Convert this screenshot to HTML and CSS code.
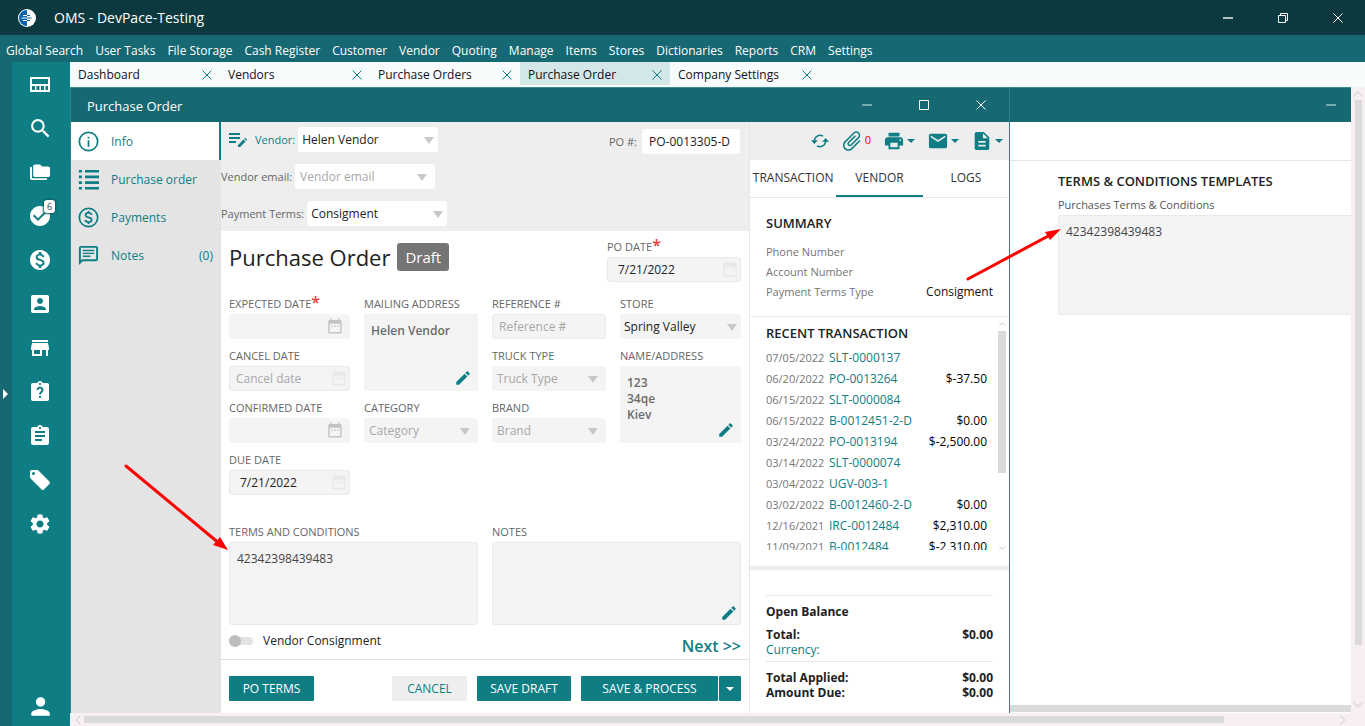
FILE: index.html
```html
<!DOCTYPE html>
<html lang="en">
    <head>
        <meta charset="UTF-8" />
        <meta name="viewport" content="width=device-width, initial-scale=1.0" />
        <title>OMS - DevPace-Testing</title>
        <link rel="stylesheet" href="styles.css">
    </head>
    <body>
        <svg class="sprite" aria-hidden="true">
            <symbol id="i-close" viewBox="0 0 12 12"><path d="M1.5 1.5l9 9M10.5 1.5l-9 9" fill="none" stroke="currentColor"/></symbol>
            <symbol id="i-min" viewBox="0 0 12 12"><path d="M1 6h10" fill="none" stroke="currentColor" stroke-width="1.4"/></symbol>
            <symbol id="i-max" viewBox="0 0 12 12"><path d="M1.5 1.5h9v9h-9z" fill="none" stroke="currentColor"/></symbol>
            <symbol id="i-up" viewBox="0 0 10 10"><path d="M1.5 7L5 3.5 8.5 7" fill="none" stroke="currentColor" stroke-width="1.3"/></symbol>
            <symbol id="i-down" viewBox="0 0 10 10"><path d="M1.5 3L5 6.5 8.5 3" fill="none" stroke="currentColor" stroke-width="1.3"/></symbol>
            <symbol id="i-left" viewBox="0 0 10 10"><path d="M7 1.5L3.5 5 7 8.5" fill="none" stroke="currentColor" stroke-width="1.3"/></symbol>
            <symbol id="i-right" viewBox="0 0 10 10"><path d="M3 1.5L6.5 5 3 8.5" fill="none" stroke="currentColor" stroke-width="1.3"/></symbol>
            <symbol id="i-edit" viewBox="0 0 24 24"><path d="M3 17.25V21h3.75L17.81 9.94l-3.75-3.75L3 17.25zM20.71 7.04c.39-.39.39-1.02 0-1.41l-2.34-2.34c-.39-.39-1.02-.39-1.41 0l-1.83 1.83 3.75 3.75 1.83-1.83z"/></symbol>
            <symbol id="i-calendar" viewBox="0 0 24 24"><path d="M9 11H7v2h2v-2zm4 0h-2v2h2v-2zm4 0h-2v2h2v-2zm2-7h-1V2h-2v2H8V2H6v2H5c-1.11 0-1.99.9-1.99 2L3 20c0 1.1.89 2 2 2h14c1.1 0 2-.9 2-2V6c0-1.1-.9-2-2-2zm0 16H5V9h14v11z"/></symbol>
        </svg>

        <header class="titlebar">
            <svg class="app-logo" viewBox="0 0 18 18">
                <circle cx="9" cy="9" r="9" fill="#fff"/>
                <path d="M9 1a8 8 0 0 0 0 16z" fill="#0b62a4"/>
                <path d="M5 6.500h4M3.500 9h5.500M5 11.500h4" stroke="#fff" stroke-width="1.2"/>
                <path d="M9 6.500h3M9 9h4.500M9 11.500h3" stroke="#0b62a4" stroke-width="1.2"/>
            </svg>
            <h1>OMS - DevPace-Testing</h1>
            <div class="app-controls">
                <button aria-label="Minimize"><svg><use href="#i-min"/></svg></button>
                <button aria-label="Restore"><svg viewBox="0 0 12 12"><path d="M1.5 3.5h7v7h-7zM3.5 3.5v-2h7v7h-2" fill="none" stroke="currentColor"/></svg></button>
                <button aria-label="Close"><svg><use href="#i-close"/></svg></button>
            </div>
        </header>

        <nav class="menubar">
            <a href="#">Global Search</a>
            <a href="#">User Tasks</a>
            <a href="#">File Storage</a>
            <a href="#">Cash Register</a>
            <a href="#">Customer</a>
            <a href="#">Vendor</a>
            <a href="#">Quoting</a>
            <a href="#">Manage</a>
            <a href="#">Items</a>
            <a href="#">Stores</a>
            <a href="#">Dictionaries</a>
            <a href="#">Reports</a>
            <a href="#">CRM</a>
            <a href="#">Settings</a>
        </nav>

        <div class="shell">
            <button class="expander" aria-label="Expand menu"></button>
            <nav class="sidebar">
                <a href="#" aria-label="Dashboard"><svg viewBox="1 1 22 22"><path fill-rule="evenodd" d="M2 5h20v15H2zM4 7v5h16V7zM4 14v4h3v-4zM8.500 14v4h3v-4zM13 14v4h3v-4zM17.500 14v4H20v-4z"/></svg></a>
                <a href="#" aria-label="Search"><svg viewBox="1 1 21 21"><path d="M15.5 14h-.79l-.28-.27A6.471 6.471 0 0 0 16 9.5 6.5 6.5 0 1 0 9.5 16c1.61 0 3.09-.59 4.23-1.57l.27.28v.79l5 4.99L20.49 19l-4.99-5zm-6 0C7.01 14 5 11.99 5 9.5S7.01 5 9.5 5 14 7.01 14 9.5 11.99 14 9.5 14z"/></svg></a>
                <a href="#" aria-label="Files"><svg viewBox="1 1 22 22"><path d="M2 7v11c0 1.2.8 2 2 2h15v-1.800H4V7zM7 4.500c-1 0-1.800.8-1.800 1.800v8.900c0 1 .8 1.800 1.800 1.800h13.200c1 0 1.800-.8 1.800-1.800V8.300c0-1-.8-1.800-1.800-1.800H14l-2-2z"/></svg></a>
                <a href="#" aria-label="Tasks"><svg viewBox="1 1 22 22"><path d="M12 2C6.48 2 2 6.48 2 12s4.48 10 10 10 10-4.48 10-10S17.52 2 12 2zm-2 15l-5-5 1.41-1.41L10 14.17l7.59-7.59L19 8l-9 9z"/></svg><span class="badge">6</span></a>
                <a href="#" aria-label="Money"><svg viewBox="1 1 22 22"><path d="M12 2C6.48 2 2 6.48 2 12s4.48 10 10 10 10-4.48 10-10S17.52 2 12 2zm1.41 16.09V20h-2.67v-1.93c-1.71-.36-3.16-1.46-3.27-3.4h1.96c.1 1.05.82 1.87 2.65 1.87 1.96 0 2.4-.98 2.4-1.59 0-.83-.44-1.61-2.67-2.14-2.48-.6-4.18-1.62-4.18-3.67 0-1.72 1.39-2.84 3.11-3.21V4h2.67v1.95c1.86.45 2.79 1.86 2.85 3.39H14.3c-.05-1.11-.64-1.87-2.22-1.87-1.5 0-2.4.68-2.4 1.64 0 .84.65 1.39 2.67 1.91s4.18 1.39 4.18 3.91c-.01 1.83-1.38 2.83-3.12 3.16z"/></svg></a>
                <a href="#" aria-label="Contacts"><svg viewBox="1 1 22 22"><path d="M3 5v14c0 1.1.89 2 2 2h14c1.1 0 2-.9 2-2V5c0-1.1-.9-2-2-2H5c-1.11 0-2 .9-2 2zm12 4c0 1.66-1.34 3-3 3s-3-1.34-3-3 1.34-3 3-3 3 1.34 3 3zm-9 8c0-2 4-3.1 6-3.1s6 1.1 6 3.1v1H6v-1z"/></svg></a>
                <a href="#" aria-label="Store"><svg viewBox="1 1 22 22"><path d="M20 4H4v2h16V4zm1 10v-2l-1-5H4l-1 5v2h1v6h10v-6h4v6h2v-6h1zm-9 4H6v-4h6v4z"/></svg></a>
                <a href="#" aria-label="Requests"><svg viewBox="1 1 22 22"><path d="M19 3h-4.18C14.4 1.84 13.3 1 12 1c-1.3 0-2.4.84-2.82 2H5c-1.1 0-2 .9-2 2v14c0 1.1.9 2 2 2h14c1.1 0 2-.9 2-2V5c0-1.1-.9-2-2-2zm-7 0c.55 0 1 .45 1 1s-.45 1-1 1-1-.45-1-1 .45-1 1-1z"/><path d="M9.500 10a2.500 2.500 0 1 1 3.800 2.100c-.9.6-1.300 1-1.300 2.400M12 16v2" class="cut"/></svg></a>
                <a href="#" aria-label="Assignments"><svg viewBox="1 1 22 22"><path d="M19 3h-4.18C14.4 1.84 13.3 1 12 1c-1.3 0-2.4.84-2.82 2H5c-1.1 0-2 .9-2 2v14c0 1.1.9 2 2 2h14c1.1 0 2-.9 2-2V5c0-1.1-.9-2-2-2zm-7 0c.55 0 1 .45 1 1s-.45 1-1 1-1-.45-1-1 .45-1 1-1zm2 14H7v-2h7v2zm3-4H7v-2h10v2zm0-4H7V7h10v2z"/></svg></a>
                <a href="#" aria-label="Price tags"><svg viewBox="1 1 22 22"><path fill-rule="evenodd" d="M2 3.500A1.500 1.500 0 0 1 3.500 2H9c.6 0 1 .2 1.400.6l11 11c.7.7.7 1.600 0 2.300l-5.500 5.500c-.7.7-1.600.7-2.300 0l-11-11C2.200 10 2 9.600 2 9zM5.500 4a1.500 1.500 0 1 0 0 3 1.500 1.500 0 0 0 0-3z"/></svg></a>
                <a href="#" aria-label="Settings"><svg viewBox="1 1 22 22"><path d="M19.14 12.94c.04-.3.06-.61.06-.94 0-.32-.02-.64-.07-.94l2.03-1.58c.18-.14.23-.41.12-.61l-1.92-3.32c-.12-.22-.37-.29-.59-.22l-2.39.96c-.5-.38-1.03-.7-1.62-.94l-.36-2.54c-.04-.24-.24-.41-.48-.41h-3.84c-.24 0-.43.17-.47.41l-.36 2.54c-.59.24-1.13.57-1.62.94l-2.39-.96c-.22-.08-.47 0-.59.22L2.74 8.87c-.12.21-.08.47.12.61l2.03 1.58c-.05.3-.09.63-.09.94s.02.64.07.94l-2.03 1.58c-.18.14-.23.41-.12.61l1.92 3.32c.12.22.37.29.59.22l2.39-.96c.5.38 1.03.7 1.62.94l.36 2.54c.05.24.24.41.48.41h3.84c.24 0 .44-.17.47-.41l.36-2.54c.59-.24 1.13-.56 1.62-.94l2.39.96c.22.08.47 0 .59-.22l1.92-3.32c.12-.22.07-.47-.12-.61l-2.01-1.58zM12 15.6c-1.98 0-3.6-1.62-3.6-3.6s1.62-3.6 3.6-3.6 3.6 1.62 3.6 3.6-1.62 3.6-3.6 3.6z"/></svg></a>
                <a href="#" aria-label="Profile" class="profile"><svg viewBox="2 2 19 19"><path d="M12 12c2.21 0 4-1.79 4-4s-1.79-4-4-4-4 1.79-4 4 1.79 4 4 4zm0 2c-2.67 0-8 1.34-8 4v2h16v-2c0-2.66-5.33-4-8-4z"/></svg></a>
            </nav>

            <div class="main">
                <div class="tabs">
                    <div class="tab"><a href="#">Dashboard</a><button aria-label="Close Dashboard"><svg><use href="#i-close"/></svg></button></div>
                    <div class="tab"><a href="#">Vendors</a><button aria-label="Close Vendors"><svg><use href="#i-close"/></svg></button></div>
                    <div class="tab"><a href="#">Purchase Orders</a><button aria-label="Close Purchase Orders"><svg><use href="#i-close"/></svg></button></div>
                    <div class="tab active"><a href="#">Purchase Order</a><button aria-label="Close Purchase Order"><svg><use href="#i-close"/></svg></button></div>
                    <div class="tab"><a href="#">Company Settings</a><button aria-label="Close Company Settings"><svg><use href="#i-close"/></svg></button></div>
                </div>

                <div class="workspace">
                    <section class="window order-window">
                        <div class="window-title">
                            <h2>Purchase Order</h2>
                            <button aria-label="Minimize" class="minimize"><svg><use href="#i-min"/></svg></button>
                            <button aria-label="Maximize"><svg><use href="#i-max"/></svg></button>
                            <button aria-label="Close"><svg><use href="#i-close"/></svg></button>
                        </div>
                        <div class="window-body">
                            <nav class="steps">
                                <a href="#" class="active"><svg viewBox="0 0 24 24"><circle cx="12" cy="12" r="10.5" class="line"/><path d="M11 10.500h2V18h-2zM11 6.500h2v2h-2z"/></svg><span>Info</span></a>
                                <a href="#"><svg viewBox="0 0 24 24"><path d="M1 1h3.500v3H1zM8 1h16v3H8zM1 7.500h3.500v3H1zM8 7.500h16v3H8zM1 14h3.500v3H1zM8 14h16v3H8zM1 20.500h3.500v3H1zM8 20.500h16v3H8z"/></svg><span>Purchase order</span></a>
                                <a href="#"><svg viewBox="0 0 24 24"><circle cx="12" cy="12" r="10.5" class="line"/><path class="line" d="M15.500 9c-.3-1.600-1.600-2.300-3.500-2.300-2 0-3.400.9-3.400 2.500 0 3.800 7 1.700 7 5.600 0 1.600-1.500 2.500-3.600 2.500s-3.500-.9-3.700-2.500M12 4.500v2.200M12 17.300v2.200"/></svg><span>Payments</span></a>
                                <a href="#"><svg viewBox="1 1 22 22"><path d="M4 4h16v12H5.170L4 17.170V4m0-2c-1.100 0-1.990.9-1.990 2L2 22l4-4h14c1.100 0 2-.9 2-2V4c0-1.100-.9-2-2-2H4zm2 10h8v1.500H6V12zm0-3h12v1.500H6V9zm0-3h12v1.500H6V6z"/></svg><span>Notes</span><em>(0)</em></a>
                            </nav>

                            <form class="order-form">
                                <div class="form-header">
                                    <div class="vendor-fields">
                                        <div class="inline-field first">
                                            <svg viewBox="0 0 18 16" class="list-edit"><path d="M0 1h11v2H0zM0 5h11v2H0zM0 9h7v2H0zM9 13l5.500-5.500 2 2L11 15H9zM15.200 6.800l1-1 2 2-1 1z"/></svg>
                                            <label for="vendor">Vendor:</label>
                                            <div class="select"><select id="vendor"><option>Helen Vendor</option></select></div>
                                        </div>
                                        <div class="inline-field">
                                            <label for="vendorEmail">Vendor email:</label>
                                            <div class="select empty"><select id="vendorEmail"><option>Vendor email</option></select></div>
                                        </div>
                                        <div class="inline-field">
                                            <label for="terms">Payment Terms:</label>
                                            <div class="select"><select id="terms"><option>Consigment</option></select></div>
                                        </div>
                                    </div>
                                    <div class="po-number">
                                        <label for="poNumber">PO #:</label>
                                        <input id="poNumber" type="text" value="PO-0013305-D">
                                    </div>
                                </div>

                                <div class="form-content">
                                    <div class="form-title">
                                        <h3>Purchase Order</h3>
                                        <span class="status">Draft</span>
                                        <div class="field po-date">
                                            <label for="poDate">PO DATE<b>*</b></label>
                                            <div class="date set"><input id="poDate" type="text" value="7/21/2022"><svg><use href="#i-calendar"/></svg></div>
                                        </div>
                                    </div>

                                    <div class="fields">
                                        <div class="field">
                                            <label for="expected">EXPECTED DATE<b>*</b></label>
                                            <div class="date open"><input id="expected" type="text"><svg><use href="#i-calendar"/></svg></div>
                                        </div>
                                        <div class="field tall">
                                            <h4>MAILING ADDRESS</h4>
                                            <div class="address">Helen Vendor<button type="button" aria-label="Edit mailing address"><svg><use href="#i-edit"/></svg></button></div>
                                        </div>
                                        <div class="field">
                                            <label for="reference">REFERENCE #</label>
                                            <input id="reference" type="text" placeholder="Reference #">
                                        </div>
                                        <div class="field">
                                            <label for="store">STORE</label>
                                            <div class="select"><select id="store"><option>Spring Valley</option></select></div>
                                        </div>
                                        <div class="field">
                                            <label for="cancel">CANCEL DATE</label>
                                            <div class="date"><input id="cancel" type="text" placeholder="Cancel date"><svg><use href="#i-calendar"/></svg></div>
                                        </div>
                                        <div class="field">
                                            <label for="truck">TRUCK TYPE</label>
                                            <div class="select empty"><select id="truck"><option>Truck Type</option></select></div>
                                        </div>
                                        <div class="field tall">
                                            <h4>NAME/ADDRESS</h4>
                                            <div class="address">123<br>34qe<br>Kiev<button type="button" aria-label="Edit name and address"><svg><use href="#i-edit"/></svg></button></div>
                                        </div>
                                        <div class="field">
                                            <label for="confirmed">CONFIRMED DATE</label>
                                            <div class="date open"><input id="confirmed" type="text"><svg><use href="#i-calendar"/></svg></div>
                                        </div>
                                        <div class="field">
                                            <label for="category">CATEGORY</label>
                                            <div class="select empty"><select id="category"><option>Category</option></select></div>
                                        </div>
                                        <div class="field">
                                            <label for="brand">BRAND</label>
                                            <div class="select empty"><select id="brand"><option>Brand</option></select></div>
                                        </div>
                                        <div class="field">
                                            <label for="due">DUE DATE</label>
                                            <div class="date set"><input id="due" type="text" value="7/21/2022"><svg><use href="#i-calendar"/></svg></div>
                                        </div>
                                    </div>

                                    <div class="notes">
                                        <div class="field">
                                            <label for="orderTerms">TERMS AND CONDITIONS</label>
                                            <textarea id="orderTerms">42342398439483</textarea>
                                        </div>
                                        <div class="field">
                                            <label for="orderNotes">NOTES</label>
                                            <div class="note-box">
                                                <textarea id="orderNotes"></textarea>
                                                <button type="button" aria-label="Edit notes"><svg><use href="#i-edit"/></svg></button>
                                            </div>
                                        </div>
                                    </div>

                                    <div class="form-bottom">
                                        <input type="checkbox" id="consignment" class="toggle">
                                        <label for="consignment">Vendor Consignment</label>
                                        <a href="#" class="next">Next &gt;&gt;</a>
                                    </div>
                                </div>

                                <div class="actions">
                                    <button type="button" class="btn terms">PO TERMS</button>
                                    <button type="button" class="btn cancel">CANCEL</button>
                                    <button type="button" class="btn draft">SAVE DRAFT</button>
                                    <div class="split">
                                        <button type="button" class="btn process">SAVE &amp; PROCESS</button>
                                        <button type="button" class="btn more" aria-label="More save options"></button>
                                    </div>
                                </div>
                            </form>

                            <aside class="info-panel">
                                <div class="tools">
                                    <button aria-label="Refresh"><svg viewBox="0 0 24 24" class="refresh"><path class="line" d="M4.500 12A7.500 7.500 0 0 1 16 5.600M19.500 12A7.500 7.500 0 0 1 8 18.400"/><path d="M0 11h9l-4.500 5zM15 13h9l-4.500-5z"/></svg></button>
                                    <button aria-label="Attachments"><svg viewBox="2 2 20 20"><path transform="rotate(45 12 12)" d="M16.5 6v11.5c0 2.21-1.79 4-4 4s-4-1.79-4-4V5c0-1.38 1.12-2.5 2.5-2.5s2.5 1.12 2.5 2.5v10.5c0 .55-.45 1-1 1s-1-.45-1-1V6H10v9.5c0 1.38 1.12 2.5 2.5 2.5s2.5-1.12 2.5-2.5V5c0-2.21-1.79-4-4-4S7 2.790 7 5v12.5c0 3.04 2.46 5.5 5.5 5.5s5.5-2.46 5.5-5.5V6h-1.5z"/></svg><span>0</span></button>
                                    <button class="drop" aria-label="Print"><svg viewBox="1 1 22 22"><path d="M19 8H5c-1.66 0-3 1.34-3 3v6h4v4h12v-4h4v-6c0-1.66-1.34-3-3-3zm-3 11H8v-5h8v5zm3-7c-.55 0-1-.45-1-1s.45-1 1-1 1 .45 1 1-.45 1-1 1zm-1-9H6v4h12V3z"/></svg></button>
                                    <button class="drop" aria-label="Email"><svg viewBox="1 1 22 22"><path d="M20 4H4c-1.1 0-1.99.9-1.99 2L2 18c0 1.1.9 2 2 2h16c1.1 0 2-.9 2-2V6c0-1.1-.9-2-2-2zm0 4l-8 5-8-5V6l8 5 8-5v2z"/></svg></button>
                                    <button class="drop" aria-label="Documents"><svg viewBox="1 1 22 22"><path d="M14 2H6c-1.1 0-1.99.9-1.99 2L4 20c0 1.1.89 2 1.99 2H18c1.1 0 2-.9 2-2V8l-6-6zm2 16H8v-2h8v2zm0-4H8v-2h8v2zm-3-5V3.5L18.5 9H13z"/></svg></button>
                                </div>
                                <div class="panel-tabs">
                                    <a href="#">TRANSACTION</a>
                                    <a href="#" class="active">VENDOR</a>
                                    <a href="#">LOGS</a>
                                </div>
                                <div class="summary">
                                    <h3>SUMMARY</h3>
                                    <p>Phone Number</p>
                                    <p>Account Number</p>
                                    <p>Payment Terms Type <span>Consigment</span></p>
                                </div>
                                <div class="recent">
                                    <div class="recent-list">
                                        <h3>RECENT TRANSACTION</h3>
                                        <table>
                                            <tr><td>07/05/2022</td><td><a href="#">SLT-0000137</a></td><td></td></tr>
                                            <tr><td>06/20/2022</td><td><a href="#">PO-0013264</a></td><td>$-37.50</td></tr>
                                            <tr><td>06/15/2022</td><td><a href="#">SLT-0000084</a></td><td></td></tr>
                                            <tr><td>06/15/2022</td><td><a href="#">B-0012451-2-D</a></td><td>$0.00</td></tr>
                                            <tr><td>03/24/2022</td><td><a href="#">PO-0013194</a></td><td>$-2,500.00</td></tr>
                                            <tr><td>03/14/2022</td><td><a href="#">SLT-0000074</a></td><td></td></tr>
                                            <tr><td>03/04/2022</td><td><a href="#">UGV-003-1</a></td><td></td></tr>
                                            <tr><td>03/02/2022</td><td><a href="#">B-0012460-2-D</a></td><td>$0.00</td></tr>
                                            <tr><td>12/16/2021</td><td><a href="#">IRC-0012484</a></td><td>$2,310.00</td></tr>
                                            <tr><td>11/09/2021</td><td><a href="#">B-0012484</a></td><td>$-2,310.00</td></tr>
                                        </table>
                                    </div>
                                    <div class="list-scroll"><svg><use href="#i-up"/></svg><i></i><svg><use href="#i-down"/></svg></div>
                                </div>
                                <div class="balance">
                                    <div class="balance-group open-balance">
                                        <h4>Open Balance</h4>
                                        <p><b>Total:</b><b>$0.00</b></p>
                                        <p><a href="#">Currency:</a></p>
                                    </div>
                                    <div class="balance-group">
                                        <p><b>Total Applied:</b><b>$0.00</b></p>
                                        <p><b>Amount Due:</b><b>$0.00</b></p>
                                    </div>
                                </div>
                            </aside>
                        </div>
                    </section>

                    <section class="window settings-window">
                        <div class="window-title">
                            <button aria-label="Minimize" class="minimize"><svg><use href="#i-min"/></svg></button>
                        </div>
                        <div class="settings-bar"></div>
                        <div class="settings-body">
                            <h3>TERMS &amp; CONDITIONS TEMPLATES</h3>
                            <label for="template">Purchases Terms &amp; Conditions</label>
                            <textarea id="template">42342398439483</textarea>
                        </div>
                        <div class="inner-scroll"></div>
                    </section>

                    <div class="vscroll"><svg><use href="#i-up"/></svg><div><i></i></div><svg><use href="#i-down"/></svg></div>
                    <div class="hscroll"><svg><use href="#i-left"/></svg><div><i></i></div><svg><use href="#i-right"/></svg></div>
                </div>
            </div>
        </div>

        <!-- callout arrows over the two terms boxes -->
        <svg class="arrows" aria-hidden="true">
            <path d="M126 466L220 544M968 279L1052 234" fill="none" stroke="#f00" stroke-width="3" stroke-linecap="round"/>
            <path d="M228 550L213 545L220 537zM1061 229L1045 232L1050 240z" fill="#f00"/>
        </svg>
    </body>
</html>
```
FILE: styles.css
```css
* {
    box-sizing: border-box;
}
body {
    margin: 0;
    height: 100vh;
    min-height: 700px;
    display: flex;
    flex-direction: column;
    overflow: hidden;
    font-family: "Open Sans", "Noto Sans", sans-serif;
    font-size: 12px;
    line-height: 16px;
    color: #222;
    background: #fff;
}
h1, h2, h3, h4, p {
    margin: 0;
    font-size: 12px;
    font-weight: 400;
}
a {
    color: inherit;
    text-decoration: none;
}
button, input, select, textarea {
    font: inherit;
    color: inherit;
    margin: 0;
    padding: 0;
    border: 0;
    background: none;
    border-radius: 0;
}
svg {
    display: block;
    flex-shrink: 0;
    fill: currentColor;
}
.sprite {
    display: none;
}
.line {
    fill: none;
    stroke: currentColor;
    stroke-width: 2;
}

/* application frame */
.titlebar {
    flex: 0 0 35px;
    display: flex;
    align-items: center;
    padding-left: 18px;
    background: #0b393f;
    color: #fff;
}
.app-logo {
    width: 18px;
    height: 18px;
}
.titlebar h1 {
    flex: 1;
    margin-left: 18px;
    font-size: 14px;
}
.app-controls {
    display: flex;
}
.app-controls button {
    width: 55px;
    height: 35px;
    display: grid;
    place-items: center;
}
.app-controls svg, .window-title svg, .tab svg {
    width: 12px;
    height: 12px;
}
.menubar {
    flex: 0 0 27px;
    display: flex;
    align-items: center;
    gap: 12px;
    padding: 4px 6px 0;
    background: #166872;
    color: #fff;
}
.shell {
    flex: 1;
    display: flex;
    min-height: 0;
}
.expander {
    width: 12px;
    background: #166872;
    display: flex;
    align-items: center;
    padding-left: 3px;
}
.expander::before {
    content: "";
    border: 5px solid transparent;
    border-left-color: #fff;
    border-right: 0;
}
.sidebar {
    width: 58px;
    display: flex;
    flex-direction: column;
    background: #0e7e84;
    color: #fff;
}
.sidebar a {
    position: relative;
    height: 44px;
    display: grid;
    place-items: center;
    padding-right: 2px;
}
.sidebar svg {
    width: 22px;
    height: 22px;
}
.sidebar .profile {
    margin-top: auto;
    height: 40px;
}
.cut {
    fill: none;
    stroke: #0e7e84;
    stroke-width: 2;
}
.badge {
    position: absolute;
    left: 32px;
    top: 6px;
    width: 11px;
    height: 13px;
    border-radius: 3px;
    background: #fff;
    box-shadow: 0 0 2px 1px #0b5d62;
    color: #333;
    font-size: 9px;
    line-height: 13px;
    text-align: center;
}
.main {
    flex: 1;
    min-width: 0;
    display: flex;
    flex-direction: column;
}
.tabs {
    flex: 0 0 25px;
    display: flex;
    padding-bottom: 2px;
    background: #f7fbfc;
}
.tab {
    width: 150px;
    display: flex;
    align-items: center;
    justify-content: space-between;
    padding: 2px 7px 0 8px;
    color: #111;
}
.tab.active {
    background: #d3e6e8;
}
.tab button {
    color: #0e7e84;
}

/* windows */
.workspace {
    flex: 1;
    min-height: 0;
    display: grid;
    grid-template-columns: 940fr 341fr 14px;
    grid-template-rows: minmax(0, 1fr) 13px;
}
.window {
    min-width: 0;
    display: flex;
    flex-direction: column;
    overflow: hidden;
}
.order-window {
    border-left: 1px solid #2f8585;
    border-right: 1px solid #2f8585;
}
.window-title {
    flex: 0 0 35px;
    display: flex;
    align-items: center;
    justify-content: flex-end;
    border-top: 1px solid #3b8b90;
    background: #166872;
    color: #fff;
}
.window-title h2 {
    flex: 1;
    padding: 2px 0 0 16px;
    font-size: 13px;
}
.window-title button {
    width: 57px;
    height: 34px;
    display: grid;
    place-items: center;
}
.window-title .minimize {
    color: #a3c5c9;
}
.settings-window .window-title button {
    width: 40px;
}
.window-body {
    flex: 1;
    min-height: 0;
    display: flex;
}
.steps {
    width: 150px;
    background: #e4e4e4;
    color: #0e7e84;
    font-weight: 500;
}
.steps a {
    height: 38px;
    display: flex;
    align-items: center;
    gap: 12px;
    padding: 0 8px 0 7px;
}
.steps a.active {
    background: #fff;
    border-right: 2px solid #0e7e84;
}
.steps svg {
    width: 21px;
    height: 21px;
}
.steps span, .steps em {
    padding-top: 2px;
    font-style: normal;
}
.steps em {
    margin-left: auto;
}

/* order form */
.order-form {
    flex: 1;
    min-width: 0;
    display: flex;
    flex-direction: column;
    border-right: 1px solid #e6e6e6;
}
.form-header {
    flex: 0 0 109px;
    display: flex;
    justify-content: space-between;
    padding: 5px 9px 0 0;
    background: #eee;
    color: #666;
    font-size: 11px;
}
.vendor-fields {
    display: flex;
    flex-direction: column;
    gap: 12px;
}
.inline-field, .po-number {
    display: flex;
    align-items: center;
    gap: 3px;
}
.inline-field.first {
    padding-left: 8px;
    color: #0e7e84;
}
.list-edit {
    width: 18px;
    height: 16px;
    margin-right: 5px;
}
.inline-field .select {
    width: 140px;
}
.po-number {
    align-self: flex-start;
    padding-top: 2px;
    gap: 5px;
}
.order-form input[type="text"], .select select {
    width: 100%;
    height: 25px;
    border-radius: 3px;
    background: #f4f4f4;
    color: #222;
    font-size: 12px;
}
.form-header input[type="text"], .form-header .select select {
    background: #fff;
}
.form-header .po-number input[type="text"] {
    width: 98px;
    padding: 0 7px;
}
.select {
    position: relative;
}
.select select {
    display: block;
    padding: 0 16px 0 4px;
    appearance: none;
}
.select::after {
    content: "";
    position: absolute;
    right: 4px;
    top: 10px;
    border: 5px solid transparent;
    border-top: 7px solid #c8c8c8;
    border-bottom: 0;
    pointer-events: none;
}
.select.empty select {
    padding-left: 5px;
    color: #a8a8a8;
}
.select.empty::after {
    right: 8px;
}
.form-content {
    flex: 1;
    display: flex;
    flex-direction: column;
    padding: 8px 8px 0;
}
.form-title {
    display: flex;
    align-items: flex-start;
    height: 57px;
}
.form-title h3 {
    font-size: 22px;
    line-height: 36px;
}
.status {
    margin: 4px 0 0 7px;
    padding: 0 8px;
    border-radius: 3px;
    background: #757575;
    color: #fff;
    font-size: 15px;
    line-height: 28px;
}
.po-date {
    width: 134px;
    margin-left: auto;
}
.field {
    display: flex;
    flex-direction: column;
    min-width: 0;
}
.field label, .field h4 {
    height: 18px;
    color: #666;
    font-size: 11px;
    line-height: 16px;
    white-space: nowrap;
}
.field label b {
    color: #f03c3c;
    font-size: 16px;
    line-height: 12px;
    font-weight: 600;
}
.fields {
    display: grid;
    grid-template-columns: 121fr 114fr 114fr 121fr;
    grid-auto-rows: 43px;
    gap: 9px 14px;
}
.field.tall {
    grid-row: span 2;
}
.field input::placeholder {
    color: #a8a8a8;
    opacity: 1;
}
.field input[type="text"] {
    padding: 0 6px;
    border: 1px solid #e9e9e9;
}
.date {
    position: relative;
}
.date input[type="text"] {
    display: block;
}
.date svg {
    position: absolute;
    right: 2px;
    top: 3px;
    width: 18px;
    height: 18px;
    color: #e8e8e8;
}
.date.open input[type="text"] {
    border: 0;
}
.date.open svg {
    right: 6px;
    color: #c4c4c4;
}
.date.set input[type="text"] {
    padding-left: 10px;
}
.address {
    position: relative;
    flex: 1;
    padding: 9px 7px;
    background: #f4f4f4;
    color: #6b6b6b;
    font-weight: 600;
}
.address button, .note-box button {
    position: absolute;
    right: 6px;
    bottom: 4px;
    color: #0e7e84;
}
.address svg, .note-box svg {
    width: 18px;
    height: 18px;
}
.notes {
    display: grid;
    grid-template-columns: 1fr 1fr;
    gap: 14px;
    margin-top: 29px;
}
textarea {
    display: block;
    width: 100%;
    height: 83px;
    padding: 8px 7px;
    border: 1px solid #e9e9e9;
    border-radius: 3px;
    background: #f4f4f4;
    color: #444;
    resize: none;
}
.note-box {
    position: relative;
}
.note-box button {
    right: 3px;
    bottom: 3px;
}
.form-bottom {
    display: flex;
    align-items: center;
    height: 32px;
}
.toggle {
    appearance: none;
    position: relative;
    width: 24px;
    height: 8px;
    margin-right: 10px;
    border-radius: 4px;
    background: #e2e2e2;
}
.toggle::before {
    content: "";
    position: absolute;
    left: 0;
    top: -2px;
    width: 12px;
    height: 12px;
    border-radius: 50%;
    background: #bdbdbd;
}
.next {
    margin-left: auto;
    padding-top: 10px;
    color: #0e7e84;
    font-size: 16px;
    font-weight: 600;
}
.actions {
    flex: 0 0 54px;
    display: flex;
    align-items: center;
    gap: 10px;
    padding: 4px 8px 0;
    border-top: 1px solid #e2e2e2;
}
.btn {
    height: 25px;
    border-radius: 1px;
    background: #0e7e84;
    color: #fff;
    white-space: nowrap;
}
.btn.terms {
    width: 85px;
    margin-right: auto;
}
.btn.cancel {
    width: 75px;
    background: #eee;
    color: #0e7e84;
}
.btn.draft {
    width: 94px;
}
.btn.process {
    width: 137px;
}
.btn.more {
    width: 22px;
    display: grid;
    place-items: center;
}
.btn.more::before {
    content: "";
    border: 4px solid transparent;
    border-top-color: #fff;
    border-bottom: 0;
}
.split {
    display: flex;
    gap: 1px;
}

/* vendor info panel */
.info-panel {
    width: 259px;
    display: flex;
    flex-direction: column;
}
.tools {
    flex: 0 0 38px;
    display: flex;
    align-items: center;
    justify-content: flex-end;
    gap: 13px;
    padding-right: 6px;
    background: #eee;
    color: #0e7e84;
}
.tools button {
    display: flex;
    align-items: center;
    gap: 3px;
}
.tools svg {
    width: 20px;
    height: 20px;
}
.tools .refresh {
    width: 18px;
    height: 18px;
}
.tools span {
    padding-bottom: 3px;
    color: #f00;
    font-size: 11px;
}
.tools .drop::after {
    content: "";
    border: 4px solid transparent;
    border-top-color: #0e7e84;
    border-bottom: 0;
}
.panel-tabs {
    flex: 0 0 38px;
    display: grid;
    grid-template-columns: 1fr 1fr 1fr;
    border-bottom: 1px solid #e6e6e6;
    line-height: 35px;
    text-align: center;
    color: #333;
}
.panel-tabs .active {
    border-bottom: 2px solid #0e7e84;
}
.info-panel h3, .settings-body h3 {
    font-size: 13px;
    font-weight: 600;
}
.summary {
    padding: 15px 16px 14px;
    border-bottom: 1px solid #eee;
}
.summary h3 {
    margin-bottom: 9px;
    line-height: 20px;
}
.summary p {
    display: flex;
    justify-content: space-between;
    color: #757575;
    font-size: 11px;
    line-height: 20px;
}
.summary p span {
    color: #111;
    font-size: 12px;
}
.recent {
    flex: 1;
    min-height: 0;
    display: flex;
    justify-content: space-between;
    padding: 0 3px 16px 16px;
}
.recent-list {
    flex: 1;
    overflow: hidden;
    padding-top: 6px;
}
.recent-list h3 {
    line-height: 20px;
    margin-bottom: 4px;
}
.recent table {
    width: 100%;
    border-collapse: collapse;
}
.recent td {
    height: 21px;
    padding: 0;
    line-height: 16px;
    white-space: nowrap;
}
.recent td:first-child {
    width: 63px;
    color: #757575;
    font-size: 11px;
}
.recent td:last-child {
    text-align: right;
    color: #000;
}
.recent a, .balance a {
    color: #0e7e84;
}
.recent a {
    font-weight: 500;
}
.list-scroll {
    width: 8px;
    margin: 1px 0 -4px 11px;
    display: flex;
    flex-direction: column;
    justify-content: space-between;
    color: #ddd;
}
.list-scroll svg {
    width: 8px;
    height: 12px;
}
.list-scroll i {
    height: 142px;
    margin: 1px 0 auto;
    background: #dadada;
}
.balance {
    border-top: 4px solid #eee;
    padding: 25px 16px 13px;
}
.balance-group {
    border-top: 1px solid #e6e6e6;
    padding-top: 8px;
    line-height: 15px;
}
.balance-group p {
    display: flex;
    justify-content: space-between;
}
.balance h4, .balance b {
    font-weight: 700;
}
.open-balance h4 {
    margin-bottom: 8px;
}
.open-balance {
    padding-bottom: 4px;
}

/* company settings window */
.settings-bar {
    flex: 0 0 39px;
    border-bottom: 1px solid #e6e6e6;
}
.settings-body {
    flex: 1;
    padding: 11px 0 0 48px;
}
.settings-body h3 {
    line-height: 18px;
    white-space: nowrap;
}
.settings-body label {
    display: block;
    padding: 7px 0 3px;
    color: #555;
    font-size: 11px;
    line-height: 15px;
}
.settings-body textarea {
    height: 100px;
    border-right: 0;
    border-radius: 3px 0 0 3px;
}
.inner-scroll {
    flex: 0 0 7px;
    margin-bottom: 1px;
    background: #dadada;
}

/* scrollbars */
.vscroll, .hscroll {
    display: flex;
    align-items: center;
    background: #f8eff3;
    color: #ddd;
}
.vscroll {
    flex-direction: column;
    padding: 1px 0 2px;
}
.vscroll svg, .hscroll svg {
    width: 12px;
    height: 12px;
}
.vscroll div {
    flex: 1;
    width: 7px;
}
.vscroll i {
    display: block;
    height: 91%;
    background: #dadada;
}
.hscroll {
    grid-column: 1 / -1;
    padding: 0 16px 0 2px;
}
.hscroll div {
    flex: 1;
    height: 7px;
}
.hscroll i {
    display: block;
    width: 91%;
    height: 100%;
    background: #dadada;
}
.arrows {
    position: absolute;
    left: 0;
    top: 0;
    width: 1365px;
    height: 726px;
    pointer-events: none;
}
```
